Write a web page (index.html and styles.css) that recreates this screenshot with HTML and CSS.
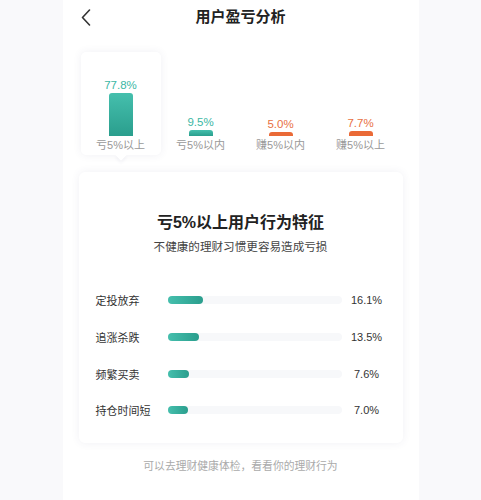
FILE: index.html
```html
<!DOCTYPE html>
<html lang="zh-CN">
<head>
  <meta charset="UTF-8">
  <meta name="viewport" content="width=device-width, initial-scale=1.0">
  <title>用户盈亏分析</title>
  <link rel="stylesheet" href="styles.css">
</head>
<body>

  <div class="page">
    <div class="header">
      <span class="back">
        <svg width="10" height="17" viewBox="0 0 10 17"><path d="M8.5 1 L1.5 8.5 L8.5 16" fill="none" stroke="#333" stroke-width="1.6" stroke-linecap="round" stroke-linejoin="round"/></svg>
      </span>
      <h1>用户盈亏分析</h1>
    </div>

    <div class="tabs">
      <div class="tab active">
        <span class="pct loss">77.8%</span>
        <span class="bar loss" style="height: 43px"></span>
        <span class="name">亏5%以上</span>
      </div>
      <div class="tab">
        <span class="pct loss">9.5%</span>
        <span class="bar loss" style="height: 6px"></span>
        <span class="name">亏5%以内</span>
      </div>
      <div class="tab">
        <span class="pct gain">5.0%</span>
        <span class="bar gain" style="height: 4px"></span>
        <span class="name">赚5%以内</span>
      </div>
      <div class="tab">
        <span class="pct gain">7.7%</span>
        <span class="bar gain" style="height: 5px"></span>
        <span class="name">赚5%以上</span>
      </div>
    </div>

    <div class="card">
      <h2>亏5%以上用户行为特征</h2>
      <p class="sub">不健康的理财习惯更容易造成亏损</p>

      <div class="rows">
        <div class="row">
          <span class="label">定投放弃</span>
          <span class="track"><span class="fill" style="width: 35px"></span></span>
          <span class="value">16.1%</span>
        </div>
        <div class="row">
          <span class="label">追涨杀跌</span>
          <span class="track"><span class="fill" style="width: 31px"></span></span>
          <span class="value">13.5%</span>
        </div>
        <div class="row">
          <span class="label">频繁买卖</span>
          <span class="track"><span class="fill" style="width: 21px"></span></span>
          <span class="value">7.6%</span>
        </div>
        <div class="row">
          <span class="label">持仓时间短</span>
          <span class="track"><span class="fill" style="width: 20px"></span></span>
          <span class="value">7.0%</span>
        </div>
      </div>
    </div>

    <p class="footer">可以去理财健康体检，看看你的理财行为</p>
  </div>

</body>
</html>
```

FILE: styles.css
```css
body {
  margin: 0;
  background: #f9f9fb;
  font-family: "Liberation Sans", "Noto Sans CJK SC", sans-serif;
  color: #333;
}
.page {
  width: 356px;
  height: 500px;
  margin: 0 auto;
  background: #fff;
  overflow: hidden;
}
.header {
  position: relative;
  height: 34px;
  display: flex;
  align-items: center;
  justify-content: center;
}
.header h1 {
  margin: 0;
  font-size: 15px;
  line-height: 20px;
  font-weight: bold;
  color: #222;
}
.back {
  position: absolute;
  left: 18px;
  top: 9px;
  line-height: 0;
}
.tabs {
  display: flex;
  margin: 18px 18px 0;
  height: 103px;
}
.tab {
  position: relative;
  flex: 1;
  display: flex;
  flex-direction: column;
  align-items: center;
  justify-content: flex-end;
  padding-bottom: 3px;
  box-sizing: border-box;
  border-radius: 5px;
}
.tab.active {
  background: #fff;
  box-shadow: 0 0 8px rgba(60, 60, 110, 0.08);
}
.tab.active::after {
  content: "";
  position: absolute;
  left: 36px;
  bottom: -4px;
  width: 8px;
  height: 8px;
  background: #fff;
  transform: rotate(45deg);
  box-shadow: 2px 2px 3px rgba(60, 60, 110, 0.05);
}
.pct {
  font-size: 11.5px;
  line-height: 12px;
  margin-bottom: 2px;
}
.pct.loss { color: #3cb7a4; }
.pct.gain { color: #e8703f; }
.bar {
  display: block;
  width: 24px;
  border-radius: 3px 3px 0 0;
}
.bar.loss { background: linear-gradient(#45bfad, #2a9e8d); }
.bar.gain { background: #ea6a37; }
.name {
  margin-top: 2px;
  font-size: 11px;
  line-height: 14px;
  color: #999;
}
.card {
  margin: 17px 16px 0;
  padding: 40px 0 14px;
  background: #fff;
  border-radius: 6px;
  box-shadow: 0 0 8px rgba(60, 60, 110, 0.08);
  text-align: center;
}
.card h2 {
  margin: 0;
  font-size: 16px;
  line-height: 22px;
  font-weight: bold;
  color: #222;
}
.sub {
  margin: 5px 0 0;
  font-size: 11.6px;
  line-height: 16px;
  color: #444;
}
.rows {
  margin-top: 27px;
}
.row {
  display: flex;
  align-items: center;
  height: 36.7px;
  padding-left: 17px;
}
.label {
  width: 72px;
  text-align: left;
  font-size: 11px;
  color: #333;
}
.track {
  width: 174px;
  height: 8px;
  border-radius: 4px;
  background: #f7f8fa;
}
.fill {
  display: block;
  height: 8px;
  border-radius: 4px;
  background: linear-gradient(90deg, #45bfad, #2a9e8d);
}
.value {
  width: 50px;
  text-align: center;
  font-size: 11px;
  color: #333;
}
.footer {
  margin: 15px 0 0;
  text-align: center;
  font-size: 10.8px;
  line-height: 16px;
  color: #aaa;
}
```
